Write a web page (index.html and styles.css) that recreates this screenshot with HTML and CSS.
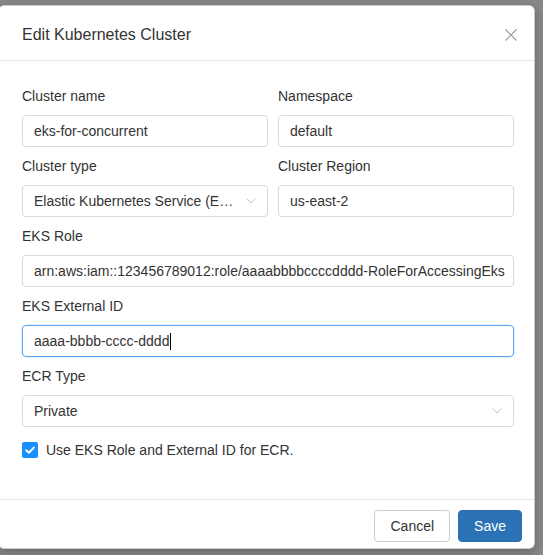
FILE: index.html
```html
<!DOCTYPE html>
<html lang="en">
<head>
<meta charset="utf-8">
<title>Edit Kubernetes Cluster</title>
<link rel="stylesheet" href="styles.css">
</head>
<body>
<div class="modal">
  <div class="modal-header">
    <div class="modal-title">Edit Kubernetes Cluster</div>
    <span class="close" aria-label="Close">
      <svg width="12" height="12" viewBox="0 0 12 12"><path d="M0.5 0.5 L11.5 11.5 M11.5 0.5 L0.5 11.5" stroke="#9a9a9a" stroke-width="1.2" fill="none"/></svg>
    </span>
  </div>
  <div class="modal-body">
    <div class="row">
      <div class="field">
        <label class="label">Cluster name</label>
        <div class="control"><span class="value">eks-for-concurrent</span></div>
      </div>
      <div class="field">
        <label class="label">Namespace</label>
        <div class="control"><span class="value">default</span></div>
      </div>
    </div>
    <div class="row">
      <div class="field">
        <label class="label">Cluster type</label>
        <div class="control select"><span class="value ellipsis">Elastic Kubernetes Service (EKS)</span>
          <svg class="arrow" width="10" height="6" viewBox="0 0 10 6"><path d="M0.5 0.5 L5 5 L9.5 0.5" stroke="#c4c4c4" stroke-width="1" fill="none"/></svg>
        </div>
      </div>
      <div class="field">
        <label class="label">Cluster Region</label>
        <div class="control"><span class="value">us-east-2</span></div>
      </div>
    </div>
    <div class="field">
      <label class="label">EKS Role</label>
      <div class="control"><span class="value">arn:aws:iam::123456789012:role/aaaabbbbccccdddd-RoleForAccessingEks</span></div>
    </div>
    <div class="field">
      <label class="label">EKS External ID</label>
      <div class="control focused"><span class="value">aaaa-bbbb-cccc-dddd</span><span class="caret"></span></div>
    </div>
    <div class="field">
      <label class="label">ECR Type</label>
      <div class="control select"><span class="value">Private</span>
        <svg class="arrow" width="10" height="6" viewBox="0 0 10 6"><path d="M0.5 0.5 L5 5 L9.5 0.5" stroke="#c4c4c4" stroke-width="1" fill="none"/></svg>
      </div>
    </div>
    <div class="check-row">
      <span class="checkbox">
        <svg width="16" height="16" viewBox="0 0 16 16"><path d="M4.2 8.2 L6.9 10.8 L11.8 5.6" stroke="#fff" stroke-width="2" fill="none" stroke-linecap="round" stroke-linejoin="round"/></svg>
      </span>
      <span class="check-label">Use EKS Role and External ID for ECR.</span>
    </div>
  </div>
  <div class="modal-footer">
    <button class="btn btn-default">Cancel</button>
    <button class="btn btn-primary">Save</button>
  </div>
</div>
</body>
</html>
```

FILE: styles.css
```css
* { box-sizing: border-box; }
html, body { margin: 0; padding: 0; }
body {
  background: #878787;
  font-family: "Liberation Sans", Arial, sans-serif;
  color: #333;
  font-size: 14px;
  padding-top: 5px;
  height: 555px;
  overflow: hidden;
}
.modal {
  width: 537px;
  margin-left: -2px;
  background: #fff;
  border: 1px solid rgba(0,0,0,0.2);
  border-radius: 6px;
  box-shadow: 0 3px 9px rgba(0,0,0,0.25);
}
.modal-header {
  display: flex;
  justify-content: space-between;
  align-items: center;
  padding: 18px 17px 14px 23px;
  border-bottom: 1px solid #e5e5e5;
}
.modal-title {
  font-size: 16px;
  line-height: 22px;
  color: #333;
}
.close { display: flex; width: 12px; height: 12px; }
.modal-body {
  padding: 24px 20px 38px 23px;
}
.row {
  display: grid;
  grid-template-columns: 246px 1fr;
  column-gap: 10px;
}
.field { margin-bottom: 8px; }
.label {
  display: block;
  line-height: 22px;
  margin-bottom: 8px;
  color: #333;
}
.control {
  position: relative;
  height: 32px;
  border: 1px solid #d9d9d9;
  border-radius: 4px;
  padding: 0 11px;
  line-height: 30px;
  color: #333;
  white-space: nowrap;
  overflow: hidden;
  display: flex;
  align-items: center;
}
.control .value { flex: 0 0 auto; }
.control.select { padding-right: 30px; }
.control .ellipsis {
  flex: 1 1 auto;
  min-width: 0;
  overflow: hidden;
  text-overflow: ellipsis;
}
.arrow {
  position: absolute;
  right: 11px;
  top: 12px;
}
.control.focused {
  border-color: #5aa7f0;
  box-shadow: 0 0 0 1px rgba(24,144,255,0.12);
}
.caret {
  display: inline-block;
  width: 1px;
  height: 17px;
  background: #000;
  margin-left: 1px;
}
.check-row {
  display: flex;
  align-items: center;
  margin-top: 12px;
  line-height: 22px;
}
.checkbox {
  width: 16px;
  height: 16px;
  border-radius: 2px;
  background: #1890ff;
  display: flex;
  margin-right: 8px;
}
.modal-footer {
  display: flex;
  justify-content: flex-end;
  gap: 8px;
  padding: 10px 12px 6px 20px;
  border-top: 1px solid #e5e5e5;
}
.btn {
  height: 32px;
  padding: 0 15px;
  font-family: "Liberation Sans", Arial, sans-serif;
  font-size: 14px;
  border-radius: 4px;
  border: 1px solid #ccc;
  background: #fff;
  color: #333;
}
.btn-primary {
  background: #2b72b7;
  border-color: #2a6eb0;
  color: #fff;
}
```
